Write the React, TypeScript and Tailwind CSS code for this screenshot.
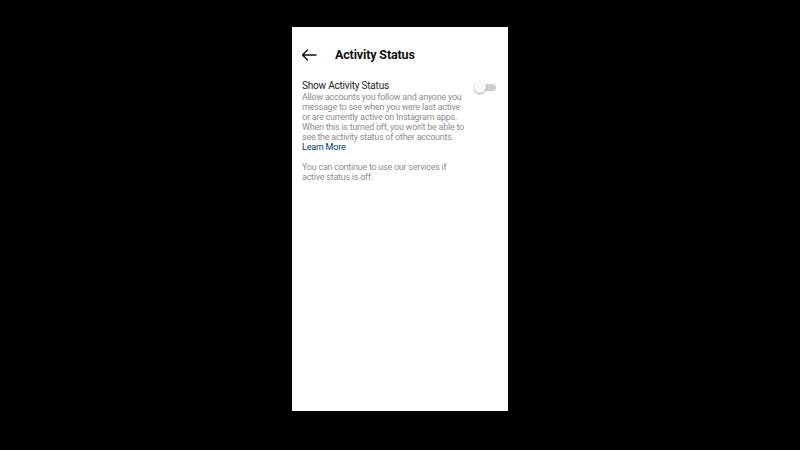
export default function App() {
    return (
        <div className="w-[800px] h-[450px] bg-black flex justify-center" style={{ fontFamily: 'Roboto, "Liberation Sans", sans-serif' }}>
            <div className="mt-[27px] w-[216px] h-[384px] bg-white">
                {/* header */}
                <div className="flex items-center h-[20px] mt-[18px] pl-[9px]">
                    <svg width="16" height="12" viewBox="0 0 16 12" fill="none" stroke="#111" strokeWidth="1.4" strokeLinecap="round" strokeLinejoin="round">
                        <path d="M15 6H1.5M6.5 1L1.5 6l5 5" />
                    </svg>
                    <h1 className="ml-[18px] text-[12.5px] tracking-[-0.15px] font-bold text-[#111] leading-none">Activity Status</h1>
                </div>

                <div className="flex mt-[15px] pl-[10px] pr-[12px]">
                    <div className="w-[164px]">
                        <div className="text-[10px] tracking-[-0.2px] leading-[12px] text-[#222]">Show Activity Status</div>
                        <p className="text-[9px] tracking-[-0.25px] leading-[10px] text-[#8e8e8e]">
                            Allow accounts you follow and anyone you message to see when you were last active or are currently active on Instagram apps. When this is turned off, you won't be able to see the activity status of other accounts.
                        </p>
                        <a className="block text-[9px] tracking-[-0.2px] leading-[10px] text-[#00376b]">Learn More</a>
                        <p className="text-[9px] tracking-[-0.25px] leading-[10px] text-[#8e8e8e] mt-[10px] w-[150px]">
                            You can continue to use our services if active status is off.
                        </p>
                    </div>
                    <div className="ml-auto mt-[1px] relative w-[22px] h-[12px]">
                        <div className="absolute left-[3px] right-0 top-[3px] h-[7px] rounded-full bg-[#cfcfcf]" />
                        <div className="absolute left-0 top-0 w-[12px] h-[12px] rounded-full bg-[#f7f7f7] shadow-[0_1px_2px_rgba(0,0,0,0.35)]" />
                    </div>
                </div>
            </div>
        </div>
    );
}
